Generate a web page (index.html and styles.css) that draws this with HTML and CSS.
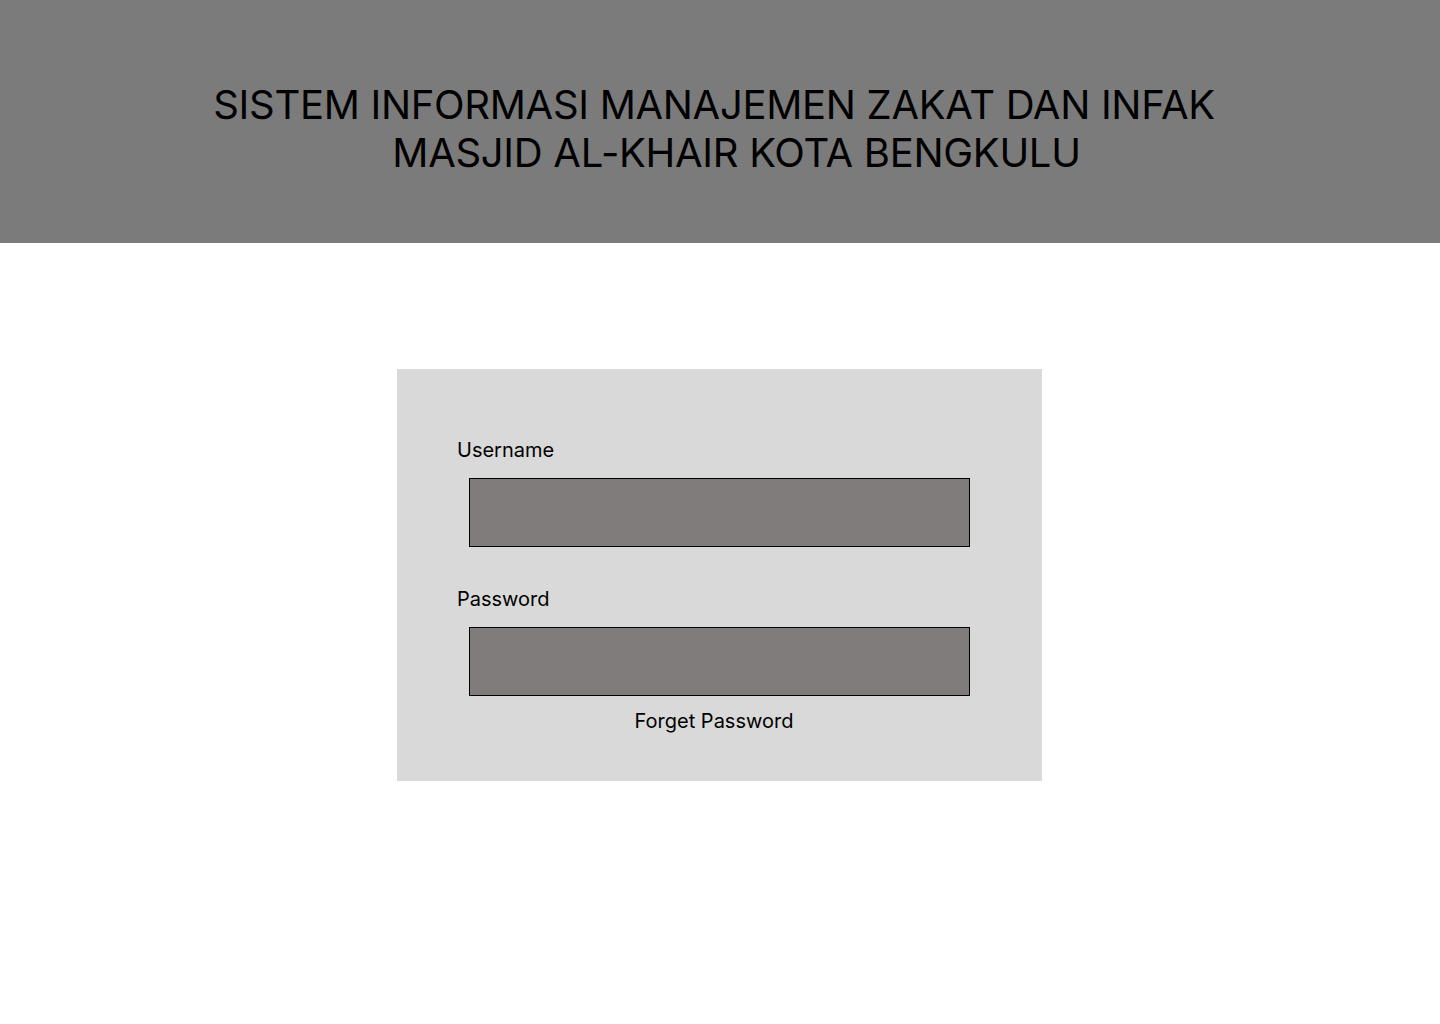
FILE: index.html
```html
<!DOCTYPE html>
<html lang="id">

<head>
    <meta charset="UTF-8">
    <meta name="viewport" content="width=device-width, initial-scale=1.0">
    <title>Login - SIM Zakat dan Infak</title>
    <link rel="stylesheet" href="styles.css">
</head>

<body>
    <header class="header">
        <h1 class="title">
            <span class="title-line">SISTEM INFORMASI MANAJEMEN ZAKAT DAN INFAK</span>
            <span class="title-line second">MASJID AL-KHAIR KOTA BENGKULU</span>
        </h1>
    </header>

    <main class="main">
        <form class="card">
            <label class="label" for="username">Username</label>
            <input class="field" type="text" id="username">

            <label class="label pass" for="password">Password</label>
            <input class="field" type="password" id="password">

            <a class="forget" href="#">Forget Password</a>
        </form>
    </main>
</body>

</html>
```

FILE: styles.css
```css
body {
    margin: 0;
    background-color: #ffffff;
    font-family: "Inter", "Noto Sans", sans-serif;
    color: #000000;
}

.header {
    height: 243px;
    background-color: #7b7b7b;
    box-sizing: border-box;
    padding-top: 81px;
}

.title {
    margin: 0;
    font-size: 40px;
    font-weight: 400;
    line-height: 48px;
    letter-spacing: -0.3px;
    text-align: center;
    padding-right: 12px;
}

.title-line {
    display: block;
}

.title-line.second {
    padding-left: 45px;
}

.main {
    padding-top: 126px;
}

.card {
    width: 645px;
    height: 412px;
    margin-left: calc(50% - 323px);
    box-sizing: border-box;
    padding: 69px 0 0 60px;
    background-color: #d9d9d9;
    display: flex;
    flex-direction: column;
}

.label {
    font-size: 20px;
    line-height: 24px;
}

.label.pass {
    margin-top: 40px;
}

.field {
    width: 501px;
    height: 69px;
    box-sizing: border-box;
    margin: 16px 0 0 12px;
    border: 1px solid #000000;
    background-color: #807c7b;
    outline: none;
}

.forget {
    margin-top: 13px;
    width: 501px;
    margin-left: 12px;
    padding-right: 11px;
    box-sizing: border-box;
    text-align: center;
    font-size: 20px;
    line-height: 24px;
    color: #000000;
    text-decoration: none;
}
```
